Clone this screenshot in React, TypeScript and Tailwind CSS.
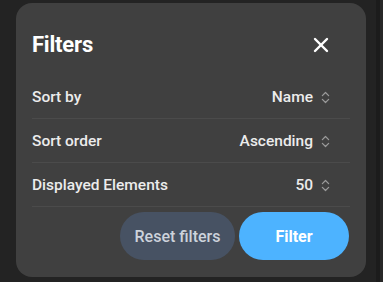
import React from 'react';
import { X, ChevronsUpDown } from 'lucide-react';

const ROWS = [
  { label: 'Sort by', value: 'Name' },
  { label: 'Sort order', value: 'Ascending' },
  { label: 'Displayed Elements', value: '50' },
];

export default function App() {
  return (
    <div className="w-[383px] h-[282px] bg-[#232323] flex font-['Roboto',sans-serif] overflow-hidden">
      {/* Modal */}
      <div className="ml-4 mt-[3px] w-[350px] h-[274px] bg-[#404040] rounded-2xl px-4 flex flex-col">
        {/* Header */}
        <div className="h-[72px] flex items-center justify-between pt-[11px] pr-[17px]">
          <h2 className="text-[22px] font-bold text-white tracking-[-0.2px]">Filters</h2>
          <button className="text-white">
            <X className="w-[24px] h-[24px]" strokeWidth={2.4} />
          </button>
        </div>

        {/* Rows */}
        {ROWS.map((row) => (
          <div
            key={row.label}
            className="h-[44px] flex items-center justify-between border-b border-[#4b4b4b] pr-[17px] pt-[2px]"
          >
            <span className="text-[15.5px] font-medium text-[#ececec]">{row.label}</span>
            <span className="flex items-center gap-[5px] text-[15.5px] font-medium text-[#ececec]">
              {row.value}
              <ChevronsUpDown className="w-[15px] h-[15px] text-[#9a9a9a]" strokeWidth={2} />
            </span>
          </div>
        ))}

        {/* Actions */}
        <div className="flex justify-end gap-1 mt-[5px] pr-px">
          <button className="w-[115px] h-[48px] rounded-full bg-[#475263] text-[#cdd3db] text-[16px] font-medium pt-px">
            Reset filters
          </button>
          <button className="w-[110px] h-[48px] rounded-full bg-[#4db3ff] text-white text-[16px] font-bold pt-px">
            Filter
          </button>
        </div>
      </div>
      <div className="ml-[10px] w-[4px] bg-[#1c1c1c]" />
      <div className="flex-1 bg-[#282828]" />
    </div>
  );
}
